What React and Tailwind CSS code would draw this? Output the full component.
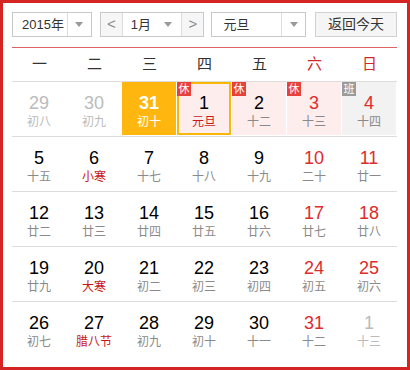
import React from 'react';

// Calendar data: [day, lunar, flags]
// flags: o = other month, w = weekend (red number), r = red lunar, t = today, s = selected, x = 休, b = 班
const rows = [
  [
    [29, '初八', 'o'], [30, '初九', 'o'], [31, '初十', 't'], [1, '元旦', 'srx'],
    [2, '十二', 'x'], [3, '十三', 'wx'], [4, '十四', 'wb'],
  ],
  [
    [5, '十五', ''], [6, '小寒', 'r'], [7, '十七', ''], [8, '十八', ''],
    [9, '十九', ''], [10, '二十', 'w'], [11, '廿一', 'w'],
  ],
  [
    [12, '廿二', ''], [13, '廿三', ''], [14, '廿四', ''], [15, '廿五', ''],
    [16, '廿六', ''], [17, '廿七', 'w'], [18, '廿八', 'w'],
  ],
  [
    [19, '廿九', ''], [20, '大寒', 'r'], [21, '初二', ''], [22, '初三', ''],
    [23, '初四', ''], [24, '初五', 'w'], [25, '初六', 'w'],
  ],
  [
    [26, '初七', ''], [27, '腊八节', 'r'], [28, '初九', ''], [29, '初十', ''],
    [30, '十一', ''], [31, '十二', 'w'], [1, '十三', 'o'],
  ],
];

const weekdays = ['一', '二', '三', '四', '五', '六', '日'];

function Caret() {
  return <span className="block w-0 h-0 border-l-[4px] border-r-[4px] border-t-[5px] border-l-transparent border-r-transparent border-t-[#999]" />;
}

function DayCell({ day, lunar, flags }) {
  const other = flags.includes('o');
  const today = flags.includes('t');
  const selected = flags.includes('s');
  const rest = flags.includes('x');
  const work = flags.includes('b');

  let bg = 'bg-white';
  if (today) bg = 'bg-[#ffb70f]';
  else if (rest) bg = 'bg-[#fdeded]';
  else if (work) bg = 'bg-[#f2f2f2]';

  let numColor = 'text-black';
  if (other) numColor = 'text-[#bbbbbb]';
  else if (today) numColor = 'text-white font-bold';
  else if (flags.includes('w')) numColor = 'text-[#dd2c2c]';

  let lunarColor = 'text-[#8a8a8a]';
  if (other) lunarColor = 'text-[#bbbbbb]';
  else if (today) lunarColor = 'text-white';
  else if (flags.includes('r')) lunarColor = 'text-[#c81818]';

  return (
    <div className="h-[54px] pr-px pb-px">
      <div className={`relative h-full flex flex-col items-center ${bg} ${selected ? 'border-2 border-[#f9b808]' : ''}`}>
        {(rest || work) && (
          <span
            className={`absolute ${selected ? '-top-[2px] -left-[2px]' : 'top-0 left-0'} w-[14px] h-[14px] flex items-center justify-center text-[11px] leading-none text-white ${rest ? 'bg-[#e8403a]' : 'bg-[#9a9a9a]'}`}
          >
            {rest ? '休' : '班'}
          </span>
        )}
        <span
          className={`${selected ? 'mt-[9px]' : 'mt-[11px]'} text-[18px] leading-[20px] font-['Liberation_Sans',Arial,sans-serif] ${numColor}`}
        >
          {day}
        </span>
        <span className={`mt-[1px] text-[12px] leading-[16px] ${lunarColor}`}>{lunar}</span>
      </div>
    </div>
  );
}

export default function App() {
  return (
    <div className="w-[410px] h-[370px] border-[3px] border-[#d42424] bg-white font-['Liberation_Sans','Noto_Sans_CJK_SC',sans-serif] text-[#333333] overflow-hidden">
      <div className="pl-[9px] pr-[10px] pt-[9px]">
        {/* controls */}
        <div className="flex items-center h-[25px] text-[13px]">
          <div className="flex w-[80px] h-[25px] border border-[#c9c9c9] bg-white">
            <span className="flex-1 flex items-center pl-[9px]">2015年</span>
            <span className="w-[24px] flex items-center justify-center border-l border-[#dcdcdc]">
              <Caret />
            </span>
          </div>
          <div className="ml-[8px] flex w-[105px] h-[25px] border border-[#c9c9c9] bg-white">
            <span className="w-[22px] flex items-center justify-center bg-[#f6f6f6] border-r border-[#dcdcdc] text-[#888] text-[15px]">
              &lt;
            </span>
            <span className="flex-1 flex items-center pl-[8px]">1月</span>
            <span className="w-[17px] flex items-center justify-start">
              <Caret />
            </span>
            <span className="w-[22px] flex items-center justify-center bg-[#f6f6f6] border-l border-[#dcdcdc] text-[#888] text-[15px]">
              &gt;
            </span>
          </div>
          <div className="ml-[7px] flex w-[95px] h-[25px] border border-[#c9c9c9] bg-white">
            <span className="flex-1 flex items-center pl-[11px]">元旦</span>
            <span className="w-[24px] flex items-center justify-center border-l border-[#dcdcdc]">
              <Caret />
            </span>
          </div>
          <div className="ml-[9px] w-[82px] h-[25px] border border-[#d2d2d2] bg-[#f5f5f5] flex items-center justify-center text-[14px]">
            返回今天
          </div>
        </div>

        <div className="mt-[10px] h-px bg-[#e06363]" />

        {/* weekday header */}
        <div className="grid grid-cols-7 h-[34px] border-b border-[#dddddd] text-[15px]">
          {weekdays.map((w, i) => (
            <div key={w} className={`flex items-center justify-center ${i >= 5 ? 'text-[#d02828]' : 'text-[#333333]'}`}>
              {w}
            </div>
          ))}
        </div>

        {/* days */}
        {rows.map((row, r) => (
          <div key={r} className={`grid grid-cols-7 ${r < rows.length - 1 ? 'border-b border-[#dddddd]' : ''}`}>
            {row.map(([day, lunar, flags], i) => (
              <DayCell key={i} day={day} lunar={lunar} flags={flags} />
            ))}
          </div>
        ))}
      </div>
    </div>
  );
}
